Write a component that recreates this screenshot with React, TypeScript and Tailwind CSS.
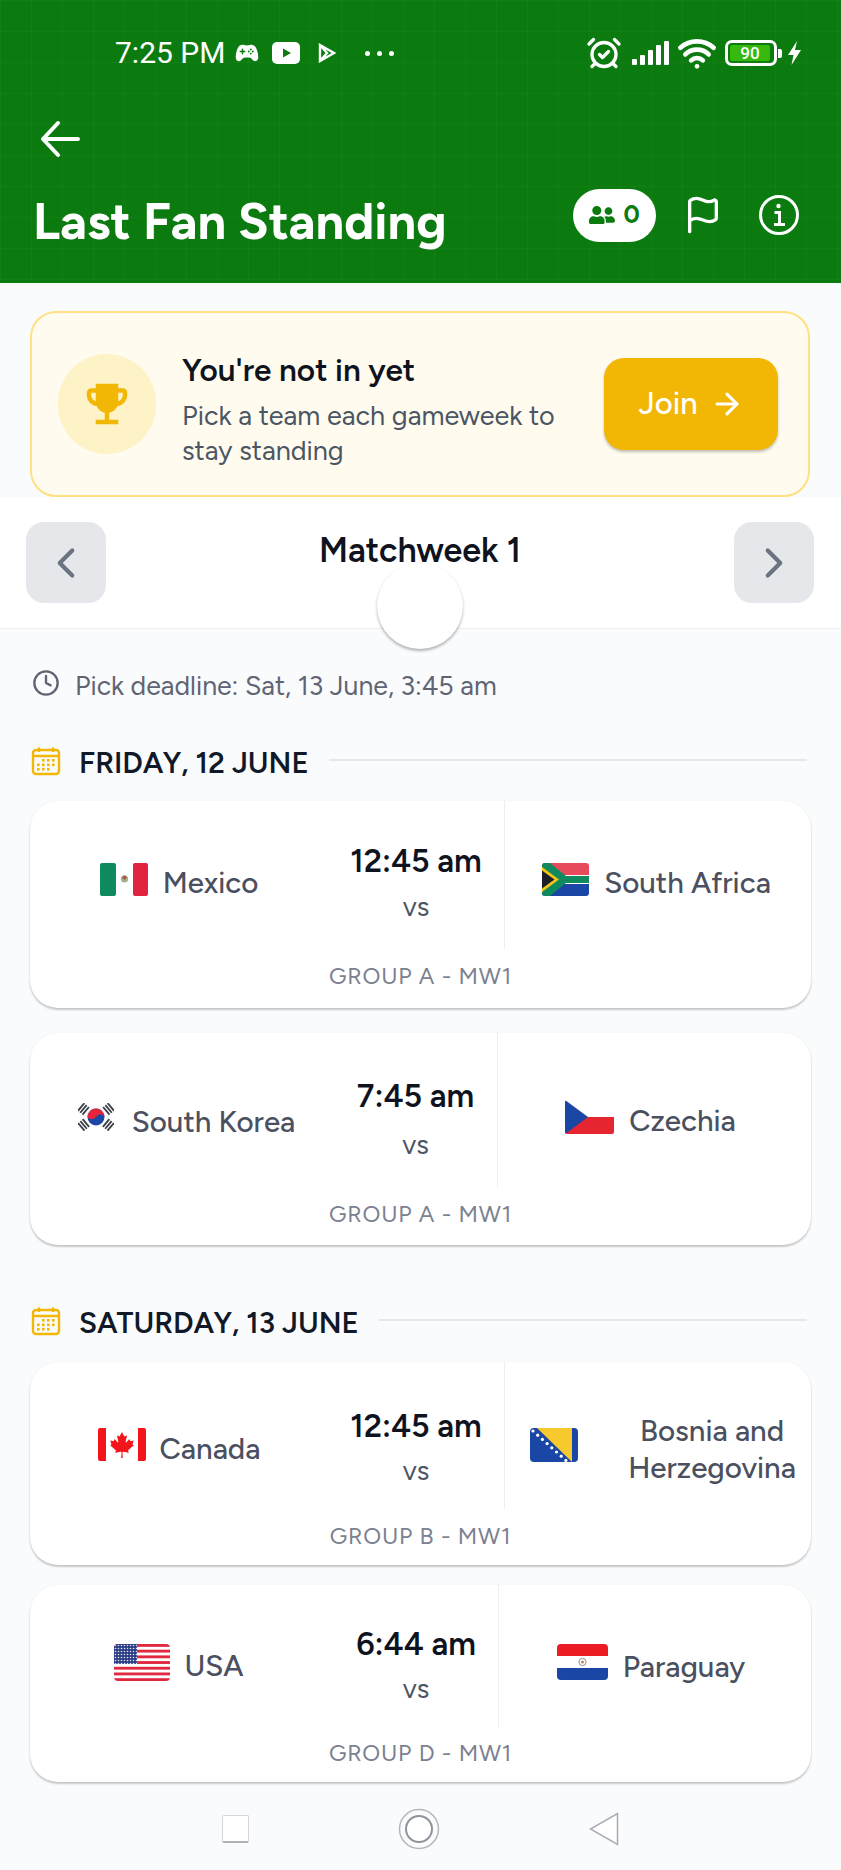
import React from "react";
import { ArrowRight, ChevronLeft, ChevronRight, Clock, Flag as FlagIcon, AlarmClockCheck, Wifi } from "lucide-react";
import { FaCanadianMapleLeaf, FaUserFriends } from "react-icons/fa";
import { IoGameController } from "react-icons/io5";
import { MdEmojiEvents } from "react-icons/md";

const Mexico = () => (
  <svg width="48" height="33" viewBox="0 0 48 33" className="shrink-0">
    <rect x="0" width="16" height="33" rx="2" fill="#0f8a5f" />
    <rect x="33" width="15" height="33" rx="2" fill="#e0243f" />
    <circle cx="24.5" cy="16" r="3.6" fill="#a3b18a" />
    <circle cx="24.5" cy="14.5" r="2" fill="#b4533c" />
  </svg>
);
const SouthAfrica = () => (
  <svg width="47" height="33" viewBox="0 0 47 33" className="shrink-0">
    <defs><clipPath id="za"><rect width="47" height="33" rx="3" /></clipPath></defs>
    <g clipPath="url(#za)">
      <rect width="47" height="33" fill="#fff" />
      <rect width="47" height="12" fill="#e74a5a" />
      <rect y="21" width="47" height="12" fill="#1a46a6" />
      <path d="M0 0 L8 0 L24 13 L47 13 L47 20 L24 20 L8 33 L0 33 Z" fill="#0f8a5f" />
      <path d="M0 4 L17 16.5 L0 29 Z" fill="#f5c518" />
      <path d="M0 7.5 L12.5 16.5 L0 25.5 Z" fill="#1c1f2a" />
    </g>
  </svg>
);
const Tri = ({ x, y, r }: { x: number; y: number; r: number }) => (
  <g transform={`translate(${x} ${y}) rotate(${r})`} fill="#3a3d45">
    <rect x="-5" y="-4" width="10" height="1.8" />
    <rect x="-5" y="-1" width="10" height="1.8" />
    <rect x="-5" y="2" width="10" height="1.8" />
  </g>
);
const Korea = () => (
  <svg width="36" height="28" viewBox="0 0 36 28" className="shrink-0">
    <Tri x={5.5} y={6} r={-50} />
    <Tri x={30.5} y={6} r={50} />
    <Tri x={5.5} y={22} r={50} />
    <Tri x={30.5} y={22} r={-50} />
    <circle cx="18" cy="14" r="8.5" fill="#1a46a6" />
    <path d="M9.5 14 A8.5 8.5 0 0 1 26.5 14 C24 10 21 11 18 14 C15 17 12 17 9.5 14 Z" fill="#e5263a" />
  </svg>
);
const Czech = () => (
  <svg width="49" height="34" viewBox="0 0 49 34" className="shrink-0">
    <defs><clipPath id="cz"><rect width="49" height="34" rx="2" /></clipPath></defs>
    <g clipPath="url(#cz)">
      <rect y="17" width="49" height="17" fill="#e5252f" />
      <path d="M0 0 L23 17 L0 34 Z" fill="#1a46a6" />
    </g>
  </svg>
);
const Canada = () => (
  <div className="relative w-[48px] h-[33px] shrink-0 flex justify-between">
    <div className="w-[8px] h-full bg-[#f4151c] rounded-l-[2px]" />
    <FaCanadianMapleLeaf className="self-center text-[#f4151c]" size={26} />
    <div className="w-[8px] h-full bg-[#f4151c] rounded-r-[2px]" />
  </div>
);
const Bosnia = () => (
  <svg width="48" height="34" viewBox="0 0 48 34" className="block shrink-0">
    <defs><clipPath id="ba"><rect width="48" height="34" rx="4" /></clipPath></defs>
    <g clipPath="url(#ba)">
      <rect width="48" height="34" fill="#1a46a6" />
      <path d="M7 0 L42 0 L42 34 Z" fill="#f7c92c" />
      {[0, 1, 2, 3, 4, 5, 6, 7].map((i) => (
        <circle key={i} cx={3 + i * 4.7} cy={3 + i * 4.2} r="1.6" fill="#fff" />
      ))}
    </g>
  </svg>
);
const USA = () => (
  <svg width="56" height="37" viewBox="0 0 56 37" className="shrink-0">
    <defs>
      <clipPath id="us"><rect width="56" height="37" rx="4" /></clipPath>
      <pattern id="st" width="3" height="3" patternUnits="userSpaceOnUse"><circle cx="1.5" cy="1.5" r="0.8" fill="#dfe3ee" /></pattern>
    </defs>
    <g clipPath="url(#us)">
      <rect width="56" height="37" fill="#fff" />
      {[0, 1, 2, 3, 4, 5, 6].map((i) => (
        <rect key={i} y={i * 5.7} width="56" height="2.85" fill="#e0283f" />
      ))}
      <rect width="23" height="20" fill="#2a3c86" />
      <rect width="23" height="20" fill="url(#st)" />
    </g>
  </svg>
);
const Paraguay = () => (
  <svg width="51" height="36" viewBox="0 0 51 36" className="shrink-0">
    <defs><clipPath id="py"><rect width="51" height="36" rx="4" /></clipPath></defs>
    <g clipPath="url(#py)">
      <rect width="51" height="12" fill="#ec1c24" />
      <rect y="24" width="51" height="12" fill="#1a46a6" />
      <circle cx="25.5" cy="18" r="3.6" fill="none" stroke="#8a8f98" strokeWidth="1" />
      <circle cx="25.5" cy="18" r="1.6" fill="#d9804f" />
    </g>
  </svg>
);

const CalendarIcon = () => (
  <svg width="30" height="30" viewBox="0 0 30 30" fill="none" stroke="#f2b705" strokeWidth="2.4" className="shrink-0 -translate-y-[2px]">
    <rect x="2" y="4" width="26" height="24" rx="3" />
    <path d="M2 10 H28 M8 1.5 V6 M22 1.5 V6" />
    <g fill="#f2b705" stroke="none">
      {[[12, 14], [17, 14], [22, 14], [7, 18.5], [12, 18.5], [17, 18.5], [22, 18.5], [7, 23], [12, 23], [17, 23]].map(([x, y], i) => (
        <rect key={i} x={x - 1} y={y - 1} width="2.6" height="2.6" />
      ))}
    </g>
  </svg>
);

const Card = ({ h, row, leftW, timeCol, timeTop, vsGap, groupCol, left, right, leftClass, rightClass, time, group }: any) => (
  <div className={`flex flex-col rounded-[28px] bg-white shadow-[0_2px_2px_rgba(0,0,0,0.2),0_0_3px_rgba(0,0,0,0.05)] ${h}`}>
    <div className={`flex ${row}`}>
      <div className={`flex justify-center items-start ${leftW} ${leftClass}`}>{left}</div>
      <div className={`flex flex-col items-center border-r border-[#eceef1] ${timeCol} ${timeTop}`}>
        <div className="text-[32px] leading-[34px] font-semibold text-[#0f1320] whitespace-nowrap">{time}</div>
        <div className={`text-[27px] leading-[26px] text-[#4b5563] ${vsGap}`}>vs</div>
      </div>
      <div className={`flex-1 flex justify-center items-start ${rightClass}`}>{right}</div>
    </div>
    <div className={`text-center text-[23px] leading-[26px] text-[#7b8190] tracking-[0.8px] ${groupCol}`}>{group}</div>
  </div>
);

const TeamName = ({ children, className }: any) => (
  <span className={`text-[29.5px] leading-[37px] text-[#4b5060] font-medium whitespace-nowrap ${className}`}>{children}</span>
);

const DateHead = ({ label, cls }: { label: string; cls: string }) => (
  <div className={`flex items-center ml-[31px] mr-[34px] ${cls}`}>
    <CalendarIcon />
    <span className="ml-[18px] text-[29.5px] leading-[32px] font-semibold text-[#111827] whitespace-nowrap">{label}</span>
    <div className="flex-1 ml-[20px] h-[2px] bg-[#e5e7eb] -translate-y-[3px]" />
  </div>
);

export default function App() {
  return (
    <div className="w-[841px] h-[1870px] overflow-hidden bg-[#fafbfd] flex flex-col font-['Figtree','Lato','Inter',sans-serif]">
      <header className="h-[283px] shrink-0 bg-[#0b7a0f] bg-[linear-gradient(rgba(255,255,255,0.03)_1px,transparent_1px),linear-gradient(90deg,rgba(255,255,255,0.03)_1px,transparent_1px)] bg-[size:31px_31px] text-white flex flex-col">
        <div className="flex items-center justify-between pl-[115px] pr-[39px] pt-[39px] h-[67px]">
          <div className="flex items-center">
            <span className="font-['Roboto',sans-serif] text-[30px] leading-[28px] w-[120px] whitespace-nowrap">7:25 PM</span>
            <IoGameController size={24} />
            <svg width="28" height="22" viewBox="0 0 28 22" className="ml-[13px]">
              <rect width="28" height="22" rx="5" fill="#fff" />
              <path d="M11 6.5 L19 11 L11 15.5 Z" fill="#0b7a0f" />
            </svg>
            <svg width="18" height="20" viewBox="0 0 18 20" fill="none" stroke="#fff" strokeWidth="2.4" className="ml-[18px]">
              <path d="M2 2 L16 10 L2 18 Z M2 2 L9 10 L2 18" />
            </svg>
            <div className="flex gap-[7px] ml-[29px]">
              <span className="w-[5px] h-[5px] rounded-full bg-white" />
              <span className="w-[5px] h-[5px] rounded-full bg-white" />
              <span className="w-[5px] h-[5px] rounded-full bg-white" />
            </div>
          </div>
          <div className="flex items-center">
            <AlarmClockCheck size={36} strokeWidth={2.2} />
            <svg width="37" height="24" viewBox="0 0 37 24" fill="#fff" className="ml-[10px]">
              <rect x="0" y="18" width="5" height="6" rx="1" />
              <rect x="8" y="14" width="5" height="10" rx="1" />
              <rect x="16" y="9" width="5" height="15" rx="1" />
              <rect x="24" y="4" width="5" height="20" rx="1" />
              <rect x="32" y="0" width="5" height="24" rx="1" />
            </svg>
            <Wifi size={40} strokeWidth={2.8} className="ml-[8px]" />
            <div className="relative ml-[8px] w-[52px] h-[26px] rounded-[7px] border-[3px] border-white flex items-center px-[2px]">
              <div className="w-[40px] h-[16px] bg-[#36b80c] rounded-[2px] flex items-center justify-center text-[17px] leading-[16px] font-['Roboto',sans-serif] font-medium">90</div>
            </div>
            <div className="w-[4px] h-[9px] bg-white rounded-r-[2px] ml-[1px]" />
            <svg width="15" height="24" viewBox="0 0 15 24" fill="#fff" className="ml-[5px]">
              <path d="M10 0 L1 14 H6.5 L4.5 24 L14 9 H8 Z" />
            </svg>
          </div>
        </div>
        <div className="pl-[39px] pt-[51px]">
          <svg width="42" height="42" viewBox="0 0 42 42" fill="none" stroke="#fff" strokeWidth="4" strokeLinecap="round" strokeLinejoin="round">
            <path d="M4 21 H39 M19 5 L4 21 L19 37" />
          </svg>
        </div>
        <div className="flex items-center pl-[33px] pr-[41px] mt-[32px]">
          <h1 className="text-[50.5px] leading-[60px] font-bold flex-1 whitespace-nowrap">Last Fan Standing</h1>
          <div className="flex items-center justify-center gap-[8px] w-[83px] h-[53px] rounded-full bg-white text-[#0b7a0f] -translate-y-[7px]">
            <FaUserFriends size={26} />
            <span className="text-[25px] font-bold">0</span>
          </div>
          <FlagIcon size={40} strokeWidth={2} className="ml-[27px] -translate-y-[7px]" />
          <svg width="42" height="42" viewBox="0 0 42 42" fill="none" stroke="#fff" strokeWidth="3" className="ml-[35px] -translate-y-[7px]">
            <circle cx="21" cy="21" r="18.5" />
            <path d="M16.5 18.5 H21.5 V30 M16 30.5 H27" />
            <circle cx="20.5" cy="12" r="2.2" fill="#fff" stroke="none" />
          </svg>
        </div>
      </header>

      <section className="ml-[30px] mr-[31px] mt-[28px] h-[186px] shrink-0 rounded-[26px] border-2 border-[#fde183] bg-[#fffcef] flex items-center pl-[26px] pr-[30px]">
        <div className="w-[98px] h-[100px] rounded-full bg-[#fef2c7] flex items-center justify-center shrink-0">
          <MdEmojiEvents size={54} className="text-[#f2b705]" />
        </div>
        <div className="ml-[26px] flex-1 self-start mt-[38px] whitespace-nowrap">
          <div className="text-[31.5px] leading-[38px] font-semibold text-[#0f1320]">You're not in yet</div>
          <div className="mt-[9px] text-[27px] leading-[35px] text-[#4b5563]">Pick a team each gameweek to<br />stay standing</div>
        </div>
        <div className="w-[174px] h-[92px] rounded-[20px] bg-[#f2b705] shadow-[0_2px_3px_rgba(0,0,0,0.25)] flex items-center justify-center gap-[12px] text-white shrink-0">
          <span className="text-[31px] font-medium">Join</span>
          <ArrowRight size={34} strokeWidth={2.2} />
        </div>
      </section>

      <section className="relative h-[132px] shrink-0 bg-white border-b border-[#eef0f3] flex items-start justify-between pl-[26px] pr-[27px] pt-[25px]">
        <div className="w-[80px] h-[81px] rounded-[18px] bg-[#e5e7eb] flex items-center justify-center text-[#6b7280]">
          <ChevronLeft size={50} strokeWidth={2} />
        </div>
        <div className="text-[34px] leading-[40px] font-semibold text-[#0f1320] mt-[9px] whitespace-nowrap">Matchweek 1</div>
        <div className="w-[80px] h-[81px] rounded-[18px] bg-[#e5e7eb] flex items-center justify-center text-[#6b7280]">
          <ChevronRight size={50} strokeWidth={2} />
        </div>
        <div className="absolute left-[377px] top-[66px] w-[86px] h-[86px] rounded-full bg-white shadow-[0_2px_3px_rgba(0,0,0,0.3)]" />
      </section>

      <div className="flex items-center mx-[32px] mt-[42px] h-[30px] shrink-0 text-[#5f6472]">
        <Clock size={28} strokeWidth={2} className="-translate-y-[3px]" />
        <span className="ml-[15px] text-[26.7px] leading-[30px] whitespace-nowrap">Pick deadline: Sat, 13 June, 3:45 am</span>
      </div>

      <DateHead label="FRIDAY, 12 JUNE" cls="mt-[46px] h-[32px] shrink-0" />

      <div className="mx-[30px] mt-[22px] flex flex-col gap-[25px] shrink-0">
        <Card h="h-[207px]" row="h-[148px]" leftW="w-[298px]" timeCol="w-[177px]" timeTop="pt-[43px]" vsGap="mt-[16px]" groupCol="mt-[14px]"
          leftClass="pt-[62px]" rightClass="pt-[62px] pr-[3px]" time="12:45 am" group="GROUP A - MW1"
          left={<><Mexico /><TeamName className="ml-[15px] mt-[1px]">Mexico</TeamName></>}
          right={<><SouthAfrica /><TeamName className="ml-[15px] mt-[1px]">South Africa</TeamName></>} />
        <Card h="h-[212px]" row="h-[155px]" leftW="w-[304px]" timeCol="w-[164px]" timeTop="pt-[46px]" vsGap="mt-[19px]" groupCol="mt-[13px]"
          leftClass="pt-[70px] pl-[9px]" rightClass="pt-[67px] pr-[8px]" time="7:45 am" group="GROUP A - MW1"
          left={<><Korea /><TeamName className="ml-[18px]">South Korea</TeamName></>}
          right={<><Czech /><TeamName className="ml-[15px] mt-[2px]">Czechia</TeamName></>} />
      </div>

      <DateHead label="SATURDAY, 13 JUNE" cls="mt-[62px] h-[32px] shrink-0" />

      <div className="mx-[30px] mt-[23px] flex flex-col gap-[20px] shrink-0">
        <Card h="h-[203px]" row="h-[147px]" leftW="w-[298px]" timeCol="w-[177px]" timeTop="pt-[47px]" vsGap="mt-[15px]" groupCol="mt-[14px]"
          leftClass="pt-[66px]" rightClass="pt-[50px] pl-[10px]" time="12:45 am" group="GROUP B - MW1"
          left={<><Canada /><TeamName className="ml-[14px] mt-[2px]">Canada</TeamName></>}
          right={<><span className="mt-[16px]"><Bosnia /></span><TeamName className="ml-[50px] text-center">Bosnia and<br />Herzegovina</TeamName></>} />
        <Card h="h-[197px]" row="h-[142px]" leftW="w-[304px]" timeCol="w-[165px]" timeTop="pt-[42px]" vsGap="mt-[15px]" groupCol="mt-[13px]"
          leftClass="pt-[59px] pr-[6px]" rightClass="pt-[59px] pr-[8px]" time="6:44 am" group="GROUP D - MW1"
          left={<><USA /><TeamName className="ml-[14px] mt-[3px]">USA</TeamName></>}
          right={<><Paraguay /><TeamName className="ml-[15px] mt-[4px]">Paraguay</TeamName></>} />
      </div>

      <nav className="flex items-center justify-center mt-[29px] h-[36px] shrink-0">
        <div className="w-[27px] h-[28px] rounded-[2px] bg-white border border-[#d4d6db] border-b-2 border-b-[#aeb1b8]" />
        <svg width="42" height="42" viewBox="0 0 42 42" fill="none" className="ml-[149px]">
          <circle cx="21" cy="21" r="19.5" stroke="#b4b7bd" strokeWidth="1.5" />
          <circle cx="21" cy="21" r="13" stroke="#8f939b" strokeWidth="2" fill="#fff" />
        </svg>
        <svg width="30" height="34" viewBox="0 0 30 34" fill="#fff" stroke="#a9acb3" strokeWidth="1.5" className="ml-[149px]">
          <path d="M28.5 1.5 V32.5 L1.5 17 Z" />
        </svg>
      </nav>
    </div>
  );
}
